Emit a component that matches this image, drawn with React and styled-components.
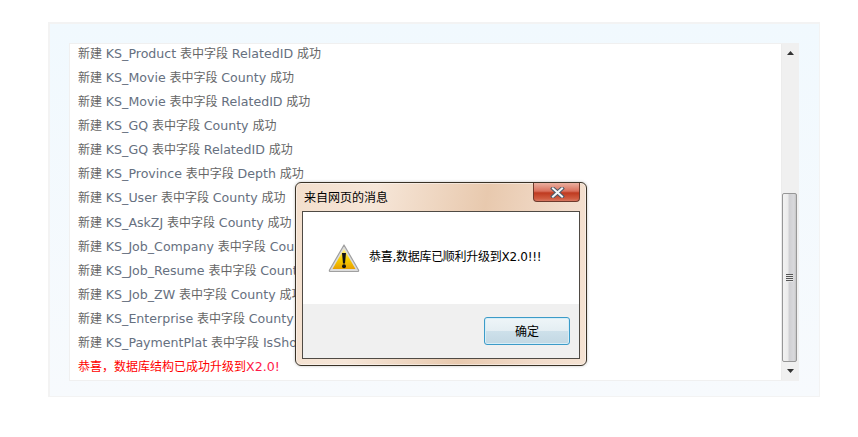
import React from 'react'
import styled, { createGlobalStyle } from 'styled-components'

const GlobalStyle = createGlobalStyle`
  html, body {
    margin: 0;
    padding: 0;
    background: #fff;
  }
  body {
    width: 858px;
    height: 437px;
    overflow: hidden;
    position: relative;
    font-family: "DejaVu Sans", "Noto Sans CJK SC", sans-serif;
  }
`

const Page = styled.div`
  padding: 22px 38px 40px 48px;
`

const Panel = styled.div`
  box-sizing: border-box;
  width: 772px;
  height: 375px;
  padding: 19px 20px 14px 19px;
  background: linear-gradient(180deg, #f1f9fe 0%, #f7fafd 100%);
  border: 2px solid #f3f3f3;
  border-bottom-width: 1px;
  border-right-width: 1px;
`

const LogBox = styled.div`
  display: flex;
  height: 338px;
  background: #fff;
  border: 1px solid #f0f0f0;
  box-sizing: border-box;
`

const LogList = styled.div`
  flex: 1;
  padding-left: 8px;
  overflow: hidden;
`

const LogLine = styled.div`
  height: 24.08px;
  line-height: 20px;
  font-size: 12px;
  white-space: nowrap;
  color: ${p => (p.$success ? '#ff0000' : '#666')};
`

const Code = styled.span`
  font-size: 12.6px;
  color: ${p => (p.$success ? '#ff1a4a' : '#667080')};
`

const Scrollbar = styled.div`
  width: 16px;
  flex: none;
  display: flex;
  flex-direction: column;
  background: #f0f0f0;
  border-left: 1px solid #ececec;
  box-sizing: content-box;
`

const ScrollArrow = styled.div`
  height: ${p => (p.$down ? '18px' : '17px')};
  flex: none;
  display: flex;
  align-items: center;
  justify-content: center;
`

const ScrollTrack = styled.div`
  flex: 1;
  display: flex;
  flex-direction: column;
  justify-content: flex-end;
`

const ScrollThumb = styled.div`
  box-sizing: border-box;
  height: 169px;
  width: 15px;
  border: 1px solid #979797;
  border-radius: 2px;
  background: linear-gradient(90deg, #f2f2f2 0%, #ebebeb 40%, #cfcfd2 45%, #d9d9dc 85%, #c4c4c4 100%);
  display: flex;
  align-items: center;
  justify-content: center;
`

const Grip = styled.div`
  width: 7px;
  height: 8px;
  background: repeating-linear-gradient(180deg, #555 0 1px, #e8e8e8 1px 2px);
`

const Dialog = styled.div`
  position: absolute;
  left: 295px;
  top: 182px;
  box-sizing: border-box;
  width: 292px;
  height: 184px;
  display: flex;
  flex-direction: column;
  padding: 0 6px 6px 6px;
  border: 1px solid #3a3226;
  border-radius: 6px;
  background: linear-gradient(100deg, #f3dfcd 0%, #f6e6d8 25%, #e8c9ae 60%, #f2dccb 85%, #f5e3d3 100%);
  box-shadow: 0 0 3px rgba(0, 0, 0, 0.25), inset 0 0 0 1px rgba(255, 255, 255, 0.45);
`

const TitleBar = styled.div`
  height: 28px;
  flex: none;
  display: flex;
  justify-content: space-between;
  align-items: flex-start;
`

const DialogTitle = styled.div`
  font-size: 12px;
  line-height: 14px;
  padding: 7px 0 0 2px;
  color: #000;
  font-family: "Noto Sans CJK SC", sans-serif;
`

const CloseButton = styled.div`
  box-sizing: border-box;
  width: 47px;
  height: 19px;
  border: 1px solid #6e3a2c;
  border-top: none;
  border-radius: 0 0 4px 4px;
  background: linear-gradient(180deg, #eab0a0 0%, #d9705c 45%, #bf3a20 55%, #cf5a3e 85%, #d77660 100%);
  display: flex;
  align-items: center;
  justify-content: center;
  padding-left: 2px;
`

const DialogBody = styled.div`
  flex: 1;
  display: flex;
  flex-direction: column;
  border: 1px solid #4f4a44;
  background: #fff;
`

const MessageRow = styled.div`
  height: 92px;
  flex: none;
  display: flex;
  align-items: flex-start;
  padding: 32px 0 0 25px;
  box-sizing: border-box;
  gap: 8px;
`

const MessageText = styled.div`
  font-size: 12px;
  line-height: 16px;
  color: #000;
  padding: 5px 0 0 1px;
  font-family: "DejaVu Sans", "Noto Sans CJK SC", sans-serif;
  letter-spacing: -0.28px;
`

const ButtonRow = styled.div`
  flex: 1;
  display: flex;
  justify-content: flex-end;
  align-items: flex-start;
  padding: 13px 9px 0 0;
  background: #f0f0f0;
`

const OkButton = styled.div`
  box-sizing: border-box;
  width: 86px;
  height: 28px;
  border: 1px solid #3c9bc8;
  border-radius: 3px;
  background: linear-gradient(180deg, #eef5f8 0%, #e4eef3 48%, #cde0ea 52%, #c3d8e3 100%);
  box-shadow: inset 0 0 0 1px #d6eef8;
  text-align: center;
  font-size: 12px;
  line-height: 26px;
  color: #000;
  font-family: "Noto Sans CJK SC", sans-serif;
`

const lines = [
  ['KS_Product', 'RelatedID'],
  ['KS_Movie', 'County'],
  ['KS_Movie', 'RelatedID'],
  ['KS_GQ', 'County'],
  ['KS_GQ', 'RelatedID'],
  ['KS_Province', 'Depth'],
  ['KS_User', 'County'],
  ['KS_AskZJ', 'County'],
  ['KS_Job_Company', 'County'],
  ['KS_Job_Resume', 'County'],
  ['KS_Job_ZW', 'County'],
  ['KS_Enterprise', 'County'],
  ['KS_PaymentPlat', 'IsShow'],
]

function WarningIcon() {
  return (
    <svg width="32" height="29" viewBox="0 0 32 29">
      <defs>
        <linearGradient id="warnFill" x1="0" y1="0" x2="0" y2="1">
          <stop offset="0" stopColor="#fff29a" />
          <stop offset="0.5" stopColor="#f8d000" />
          <stop offset="1" stopColor="#e8a000" />
        </linearGradient>
      </defs>
      <path d="M16 1 L30.5 26 Q31 27.5 29.5 27.5 L2.5 27.5 Q1 27.5 1.5 26 Z" fill="#dcdcdc" stroke="#a0a0a0" strokeWidth="1.2" strokeLinejoin="round" />
      <path d="M16 5 L27.5 25 L4.5 25 Z" fill="url(#warnFill)" />
      <path d="M14 9 L18 9 L17 19.5 L15 19.5 Z" fill="#111" />
      <circle cx="16" cy="22.3" r="2" fill="#111" />
    </svg>
  )
}

function CloseGlyph() {
  return (
    <svg width="15" height="11" viewBox="0 0 15 11">
      <path d="M3 1.5 L12 9.5 M12 1.5 L3 9.5" stroke="#4c5a68" strokeWidth="4" strokeLinecap="square" />
      <path d="M3 1.5 L12 9.5 M12 1.5 L3 9.5" stroke="#f4f6f8" strokeWidth="2" strokeLinecap="square" />
    </svg>
  )
}

function Arrow({ down }) {
  return (
    <svg width="7" height="4" viewBox="0 0 7 4">
      <path d={down ? 'M0 0 H7 L3.5 4 Z' : 'M3.5 0 L7 4 H0 Z'} fill="#333" />
    </svg>
  )
}

export default function App() {
  return (
    <>
      <GlobalStyle />
      <Page>
        <Panel>
          <LogBox>
            <LogList>
              {lines.map(([table, field]) => (
                <LogLine key={table + field}>
                  新建 <Code>{table}</Code> 表中字段 <Code>{field}</Code> 成功
                </LogLine>
              ))}
              <LogLine $success>恭喜，数据库结构已成功升级到<Code $success>X2.0!</Code></LogLine>
            </LogList>
            <Scrollbar>
              <ScrollArrow><Arrow /></ScrollArrow>
              <ScrollTrack>
                <ScrollThumb><Grip /></ScrollThumb>
              </ScrollTrack>
              <ScrollArrow $down><Arrow down /></ScrollArrow>
            </Scrollbar>
          </LogBox>
        </Panel>
      </Page>
      <Dialog>
        <TitleBar>
          <DialogTitle>来自网页的消息</DialogTitle>
          <CloseButton><CloseGlyph /></CloseButton>
        </TitleBar>
        <DialogBody>
          <MessageRow>
            <WarningIcon />
            <MessageText>恭喜,数据库已顺利升级到X2.0!!!</MessageText>
          </MessageRow>
          <ButtonRow>
            <OkButton>确定</OkButton>
          </ButtonRow>
        </DialogBody>
      </Dialog>
    </>
  )
}
